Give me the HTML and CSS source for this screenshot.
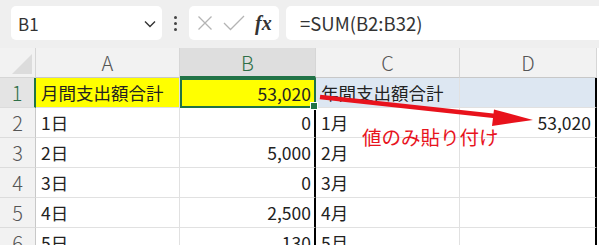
FILE: index.html
```html
<!DOCTYPE html>
<html lang="ja">
<head>
<meta charset="utf-8">
<link rel="stylesheet" href="styles.css">
</head>
<body>
<div class="app">
  <div class="toolbar">
    <div class="namebox">
      <span class="name">B1</span>
      <svg class="chev" width="12" height="8" viewBox="0 0 12 8"><polyline points="1,1.5 6,6.5 11,1.5" fill="none" stroke="#333" stroke-width="1.4"/></svg>
    </div>
    <div class="dots"><span></span><span></span><span></span></div>
    <div class="fxbox">
      <svg width="16" height="16" viewBox="0 0 16 16"><path d="M1.5 1.5 L14.5 14.5 M14.5 1.5 L1.5 14.5" stroke="#b4b4b4" stroke-width="1.3" fill="none"/></svg>
      <svg width="22" height="16" viewBox="0 0 22 16"><polyline points="1,8 7.5,14.5 21,1" stroke="#b4b4b4" stroke-width="1.3" fill="none"/></svg>
      <span class="fx">fx</span>
    </div>
    <div class="formula">=SUM(B2:B32)</div>
  </div>

  <div class="sheet">
    <div class="grid">
      <div class="corner"><span class="tri"></span></div>
      <div class="ch">A</div>
      <div class="ch ch-sel">B</div>
      <div class="ch">C</div>
      <div class="ch">D</div>

      <div class="rh rh-sel">1</div>
      <div class="cell yellow">月間支出額合計</div>
      <div class="cell yellow num sel">53,020<span class="handle"></span></div>
      <div class="cell blue">年間支出額合計</div>
      <div class="cell blue edge"></div>

      <div class="rh">2</div>
      <div class="cell">1日</div>
      <div class="cell num bline">0</div>
      <div class="cell">1月</div>
      <div class="cell num edge">53,020</div>

      <div class="rh">3</div>
      <div class="cell">2日</div>
      <div class="cell num bline">5,000</div>
      <div class="cell">2月</div>
      <div class="cell edge"></div>

      <div class="rh">4</div>
      <div class="cell">3日</div>
      <div class="cell num bline">0</div>
      <div class="cell">3月</div>
      <div class="cell edge"></div>

      <div class="rh">5</div>
      <div class="cell">4日</div>
      <div class="cell num bline">2,500</div>
      <div class="cell">4月</div>
      <div class="cell edge"></div>

      <div class="rh">6</div>
      <div class="cell">5日</div>
      <div class="cell num bline">130</div>
      <div class="cell">5月</div>
      <div class="cell edge"></div>
    </div>

    <svg class="arrow" width="599" height="197" viewBox="0 48 599 197">
      <path d="M320 97 L500 116.5" stroke="#e8121c" stroke-width="4.5" fill="none"/>
      <polygon points="533,120 494,109.5 492,126" fill="#e8121c"/>
    </svg>
    <div class="note">値のみ貼り付け</div>
  </div>
</div>
</body>
</html>
```

FILE: styles.css
```css
* { box-sizing: border-box; }
html, body { margin: 0; padding: 0; }
body {
  width: 599px;
  height: 245px;
  overflow: hidden;
  background: #ffffff;
  font-family: "Noto Sans CJK JP", "Noto Sans", sans-serif;
  color: #222;
}
.app { width: 599px; }

.toolbar {
  height: 48px;
  background: #efefef;
  display: flex;
  align-items: flex-start;
  padding: 6px 0 0 11px;
}
.namebox {
  width: 151px;
  height: 34px;
  background: #fff;
  border-radius: 5px;
  display: flex;
  align-items: center;
  justify-content: space-between;
  padding: 0 6px 0 7px;
}
.name { font-size: 17px; color: #333; }
.chev { margin-top: 1px; }
.dots {
  width: 27px;
  height: 34px;
  display: flex;
  flex-direction: column;
  align-items: center;
  justify-content: center;
  gap: 3px;
}
.dots span { width: 3px; height: 3px; background: #444; border-radius: 50%; }
.fxbox {
  width: 90px;
  height: 34px;
  background: #fff;
  border-radius: 5px;
  display: flex;
  align-items: center;
  padding: 0 0 0 8px;
  gap: 10px;
}
.fx {
  font-family: "Liberation Serif", serif;
  font-style: italic;
  font-weight: bold;
  font-size: 20px;
  color: #333;
}
.formula {
  flex: 1;
  height: 34px;
  margin-left: 7px;
  background: #fff;
  border-radius: 5px 0 0 5px;
  padding: 0 0 0 14px;
  display: flex;
  align-items: center;
  font-size: 18.5px;
  color: #333;
}

.sheet {
  position: relative;
  height: 197px;
  overflow: hidden;
}
.grid {
  display: grid;
  grid-template-columns: 36px 144px 136px 144px 137px;
  grid-template-rows: repeat(7, 30px);
}

.corner {
  background: #f2f2f2;
  border-right: 1px solid #d6d6d6;
  border-bottom: 1px solid #d6d6d6;
  position: relative;
}
.tri {
  position: absolute;
  right: 3px;
  bottom: 3px;
  width: 0;
  height: 0;
  border-left: 20px solid transparent;
  border-bottom: 20px solid #dcdcdc;
}
.ch {
  background: #f2f2f2;
  border-right: 1px solid #d6d6d6;
  border-bottom: 1px solid #c8c8c8;
  display: flex;
  align-items: center;
  justify-content: center;
  font-size: 20px;
  font-weight: 300;
  color: #555;
}
.ch-sel {
  background: #dedede;
  color: #2f6f47;
  border-bottom: 2px solid #217346;
}
.rh {
  background: #f2f2f2;
  border-right: 1px solid #c8c8c8;
  border-bottom: 1px solid #dcdcdc;
  display: flex;
  align-items: center;
  justify-content: center;
  font-size: 20px;
  font-weight: 300;
  color: #555;
}
.rh-sel {
  background: #e4e4e4;
  color: #2f6f47;
  border-right: 2px solid #217346;
}
.cell {
  border-right: 1px solid #e1e1e1;
  border-bottom: 1px solid #e1e1e1;
  display: flex;
  align-items: center;
  padding: 0 4px 0 5px;
  font-size: 17.5px;
  color: #222;
  white-space: nowrap;
  position: relative;
}
.num { justify-content: flex-end; }
.yellow { background: #ffff00; }
.blue { background: #dde7f2; }
.sel {
  border: 2px solid #217346;
  padding-right: 3px;
}
.handle {
  position: absolute;
  right: -4px;
  bottom: -4px;
  width: 6px;
  height: 6px;
  background: #217346;
  border: 1px solid #fff;
  box-sizing: content-box;
  z-index: 2;
}
.bline { border-right: 2px solid #000; padding-right: 3px; }
.edge { border-right: 2px solid #000; }

.arrow {
  position: absolute;
  left: 0;
  top: 0;
  pointer-events: none;
}
.note {
  position: absolute;
  left: 362px;
  top: 74px;
  font-size: 19.5px;
  color: #e8141e;
  white-space: nowrap;
}
```
